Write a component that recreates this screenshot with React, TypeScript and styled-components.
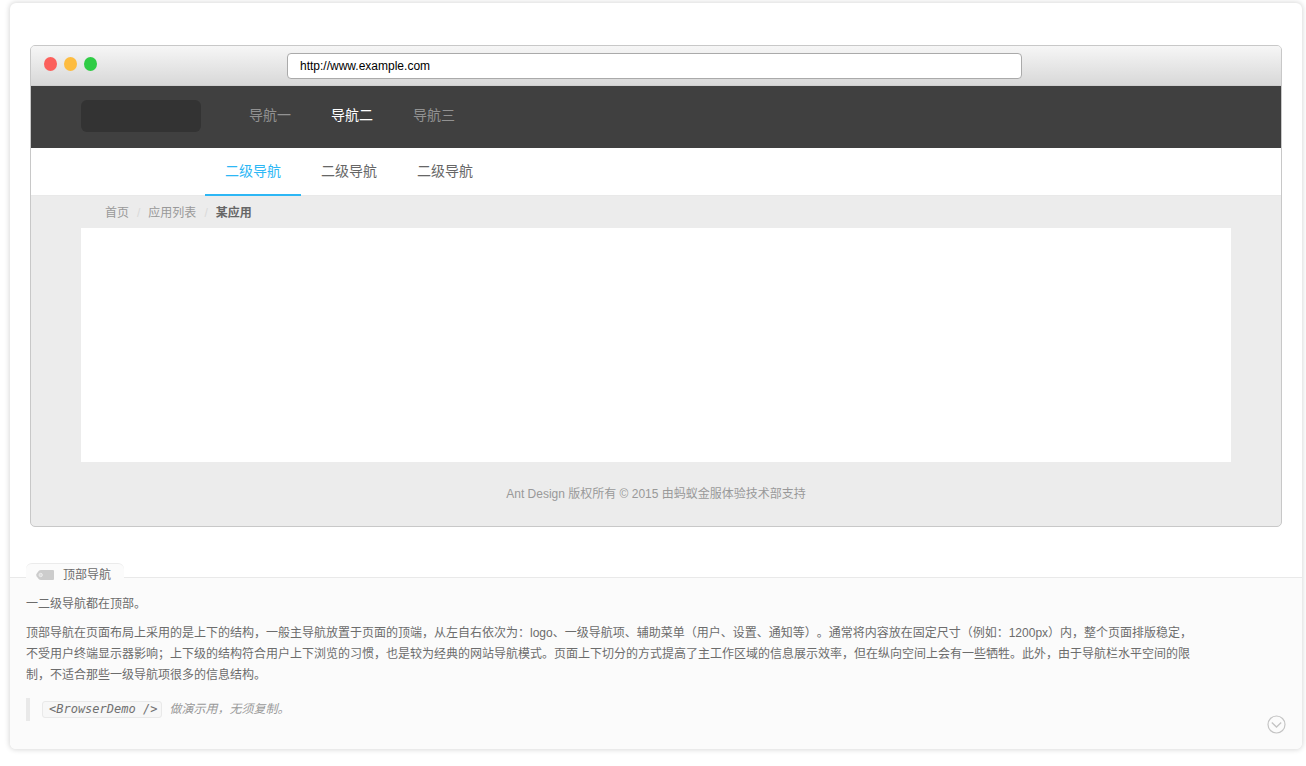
import React, { useState } from "react";
import styled, { createGlobalStyle } from "styled-components";

const GlobalStyle = createGlobalStyle`
  *, *::before, *::after { box-sizing: border-box; }
  body {
    margin: 0;
    background: #fff;
    color: #6c6c6c;
    font-family: "Liberation Sans", "Noto Sans CJK SC", sans-serif;
    font-size: 12px;
    line-height: 21px;
    text-spacing-trim: space-all;
  }
  p, ul, ol, blockquote { margin: 0; padding: 0; }
  ul, ol { list-style: none; }
  a { color: inherit; text-decoration: none; }
`;

const Card = styled.section`
  margin: 3px 4px 16px 10px;
  border-radius: 6px;
  background: #fff;
  box-shadow: 0 0 5px 1px rgba(0, 0, 0, 0.15);
`;

const Preview = styled.div`
  padding: 42px 20px 50px;
`;

const Browser = styled.div`
  border: 1px solid #c8c8c8;
  border-radius: 5px;
  overflow: hidden;
  background: #ececec;
`;

const TitleBar = styled.div`
  display: flex;
  align-items: flex-start;
  height: 40px;
  padding: 7px 259px 0 13px;
  border-bottom: 1px solid #cfcfcf;
  background: linear-gradient(#f6f6f6, #d8d8d8);
`;

const Lights = styled.div`
  display: flex;
  flex: 0 0 243px;
  gap: 7px;
  padding-top: 4px;
`;

const Light = styled.span<{ $color: string }>`
  width: 13px;
  height: 14px;
  border-radius: 50%;
  background: ${(p) => p.$color};
`;

const Address = styled.input`
  flex: 1;
  min-width: 0;
  height: 26px;
  padding: 0 12px;
  border: 1px solid #aaa;
  border-radius: 4px;
  background: #fff;
  color: #000;
  font: 12px "Liberation Sans", sans-serif;
  outline: none;
`;

const MainNav = styled.nav`
  display: flex;
  align-items: flex-start;
  height: 62px;
  padding: 14px 50px;
  background: #404040;
`;

const Logo = styled.div`
  width: 120px;
  height: 32px;
  margin-right: 48px;
  border-radius: 6px;
  background: #333;
`;

const MainList = styled.ul`
  display: flex;
  gap: 40px;
  font-size: 14px;
  line-height: 30px;
`;

const MainLink = styled.a<{ $active?: boolean }>`
  color: ${(p) => (p.$active ? "#fff" : "#929292")};
`;

const SubNav = styled.nav`
  height: 48px;
  padding-left: 174px;
  border-bottom: 1px solid #e9e9e9;
  background: #fff;
`;

const SubList = styled.ul`
  display: flex;
  font-size: 14px;
  line-height: 46px;
`;

const SubLink = styled.a<{ $active?: boolean }>`
  display: block;
  height: 48px;
  padding: 0 20px;
  border-bottom: 2px solid ${(p) => (p.$active ? "#2db7f5" : "transparent")};
  color: ${(p) => (p.$active ? "#2db7f5" : "#666")};
`;

const Body = styled.div`
  padding: 0 50px;
`;

const Crumbs = styled.ol`
  display: flex;
  height: 32px;
  padding-left: 24px;
  line-height: 34px;
  color: #999;

  li + li::before {
    content: "/";
    margin: 0 8px;
    color: #d9d9d9;
    font-weight: 400;
  }
  li:last-child {
    color: #666;
    font-weight: 700;
  }
`;

const Content = styled.main`
  height: 234px;
  background: #fff;
`;

const Footer = styled.footer`
  line-height: 64px;
  text-align: center;
  color: #999;
`;

const Description = styled.div`
  position: relative;
  padding: 16px 106px 28px 16px;
  border-top: 1px solid #e9e9e9;
  border-radius: 0 0 6px 6px;
  background: #fbfbfb;
`;

const Legend = styled.div`
  position: absolute;
  top: -15px;
  left: 16px;
  display: flex;
  align-items: center;
  gap: 9px;
  height: 23px;
  padding: 0 13px 0 10px;
  border-top: 1px solid #ebebeb;
  border-radius: 6px 6px 0 0;
  background: #fbfbfb;
  line-height: 22px;
`;

const Paragraph = styled.p`
  margin-bottom: 8px;
`;

const Note = styled.blockquote`
  display: flex;
  align-items: center;
  gap: 7px;
  height: 23px;
  margin-top: 12px;
  padding-left: 12px;
  border-left: 4px solid #e9e9e9;
  color: #999;
  font-style: italic;
`;

const Code = styled.code`
  padding: 0 4px 0 6px;
  border: 1px solid #e9e9e9;
  border-radius: 3px;
  background: #f7f7f7;
  color: #707070;
  font-family: "DejaVu Sans Mono", monospace;
  font-size: 12px;
  line-height: 15px;
`;

const Toggle = styled.button<{ $open: boolean }>`
  position: absolute;
  right: 16px;
  bottom: 15px;
  display: block;
  width: 19px;
  height: 19px;
  padding: 0;
  border: 0;
  background: none;
  color: #c4c4c4;
  cursor: pointer;

  svg {
    display: block;
    transform: ${(p) => (p.$open ? "rotate(180deg)" : "none")};
  }
`;

const mainItems = ["导航一", "导航二", "导航三"];
const subItems = ["二级导航", "二级导航", "二级导航"];

export default function App() {
  const [main, setMain] = useState(1);
  const [sub, setSub] = useState(0);
  const [open, setOpen] = useState(false);

  return (
    <>
      <GlobalStyle />
      <Card>
        <Preview>
          <Browser>
            <TitleBar>
              <Lights>
                <Light $color="#fc605c" />
                <Light $color="#fdbc40" />
                <Light $color="#2fcc45" />
              </Lights>
              <Address aria-label="URL" defaultValue="http://www.example.com" />
            </TitleBar>
            <MainNav>
              <Logo />
              <MainList>
                {mainItems.map((label, i) => (
                  <li key={label}>
                    <MainLink href="#" $active={i === main} onClick={() => setMain(i)}>
                      {label}
                    </MainLink>
                  </li>
                ))}
              </MainList>
            </MainNav>
            <SubNav>
              <SubList>
                {subItems.map((label, i) => (
                  <li key={i}>
                    <SubLink href="#" $active={i === sub} onClick={() => setSub(i)}>
                      {label}
                    </SubLink>
                  </li>
                ))}
              </SubList>
            </SubNav>
            <Body>
              <Crumbs>
                <li><a href="#">首页</a></li>
                <li><a href="#">应用列表</a></li>
                <li>某应用</li>
              </Crumbs>
              <Content />
              <Footer>Ant Design 版权所有 © 2015 由蚂蚁金服体验技术部支持</Footer>
            </Body>
          </Browser>
        </Preview>
        <Description>
          <Legend>
            <svg width="18" height="10" viewBox="0 0 18 10" aria-hidden="true">
              <path
                fill="#ccc"
                d="M5 0H17a1 1 0 0 1 1 1v8a1 1 0 0 1-1 1H5Q3.500 10 2.600 9L0.600 6.200Q-0.200 5 0.600 3.800L2.600 1Q3.500 0 5 0Z"
              />
              <circle cx="4.7" cy="5" r="1.7" fill="#ddd" stroke="#f0f0f0" strokeWidth="0.8" />
            </svg>
            <a href="#">顶部导航</a>
          </Legend>
          <Paragraph>一二级导航都在顶部。</Paragraph>
          <Paragraph>
            顶部导航在页面布局上采用的是上下的结构，一般主导航放置于页面的顶端，从左自右依次为：logo、一级导航项、辅助菜单（用户、设置、通知等）。通常将内容放在固定尺寸（例如：1200px）内，整个页面排版稳定，不受用户终端显示器影响；上下级的结构符合用户上下浏览的习惯，也是较为经典的网站导航模式。页面上下切分的方式提高了主工作区域的信息展示效率，但在纵向空间上会有一些牺牲。此外，由于导航栏水平空间的限制，不适合那些一级导航项很多的信息结构。
          </Paragraph>
          <Note>
            <Code>{"<BrowserDemo />"}</Code>
            <span>做演示用，无须复制。</span>
          </Note>
          <Toggle type="button" aria-label="展开代码" $open={open} onClick={() => setOpen(!open)}>
            <svg width="19" height="19" viewBox="0 0 19 19" fill="none" stroke="currentColor">
              <circle cx="9.5" cy="9.5" r="8.5" strokeWidth="1.2" />
              <path d="M4.800 7.500L9.500 12L14.200 7.500" strokeWidth="1.3" />
            </svg>
          </Toggle>
        </Description>
      </Card>
    </>
  );
}
